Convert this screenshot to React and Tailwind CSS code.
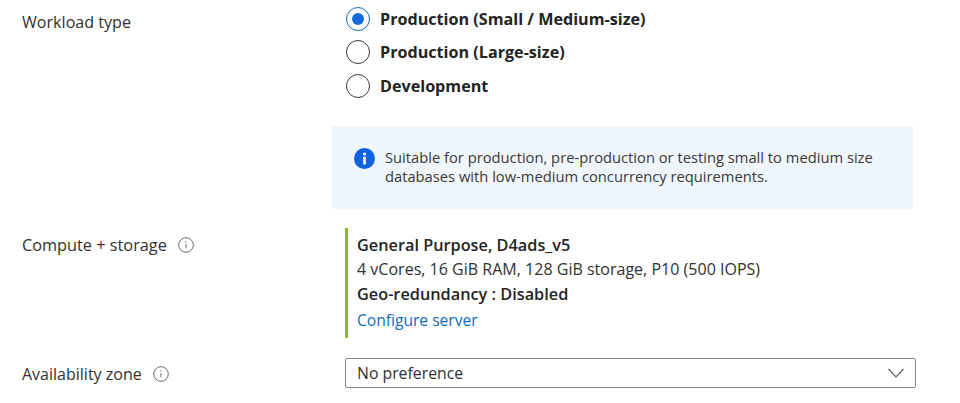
function Radio({ checked, label }) {
  return (
    <div className="flex items-center h-[33.5px] gap-[10px]">
      <span className={`flex items-center justify-center w-[24px] h-[24px] rounded-full border-[1.5px] ${checked ? "border-[#0f6cbd]" : "border-[#3b3b3b]"}`}>
        {checked && <span className="w-[12px] h-[12px] rounded-full bg-[#0f6cda]" />}
      </span>
      <span className="font-bold text-[16.15px] text-[#242424]">{label}</span>
    </div>
  );
}
function Tip() {
  return (
    <svg width="16" height="16" viewBox="0 0 16 16" fill="none" className="shrink-0">
      <circle cx="8" cy="8" r="7.3" stroke="#6b6b6b" strokeWidth="1" />
      <path d="M8 7v4.2" stroke="#6b6b6b" strokeWidth="1" />
      <circle cx="8" cy="4.9" r="0.7" fill="#6b6b6b" />
    </svg>
  );
}
export default function App() {
  return (
    <div className="w-[960px] h-[403px] overflow-hidden bg-white text-[#323130] text-[16px] font-['Open_Sans','Noto_Sans',sans-serif]">
      <div className="flex pt-[2px]">
        <div className="w-[332px] pl-[22px] pt-[9px] leading-[22px] text-[16.1px]">Workload type</div>
        <div className="w-[581px]">
          <div className="pl-[14px]">
            <Radio checked label="Production (Small / Medium-size)" />
            <Radio label="Production (Large-size)" />
            <Radio label="Development" />
          </div>
          <div className="mt-[23px] h-[83px] bg-[#eff6fc] flex items-center pl-[22px] pr-[30px] gap-[10px]">
            <svg width="21" height="21" viewBox="0 0 21 21" className="shrink-0 -mt-[18px]">
              <circle cx="10.5" cy="10.5" r="10.5" fill="#0f62e0" />
              <circle cx="10.5" cy="6" r="1.5" fill="#fff" />
              <rect x="9.2" y="8.8" width="2.6" height="7.6" rx="0.5" fill="#fff" />
            </svg>
            <p className="text-[14.73px] leading-[19px] text-[#3b3a39]">
              Suitable for production, pre-production or testing small to medium size databases with low-medium concurrency requirements.
            </p>
          </div>
        </div>
      </div>
      <div className="flex mt-[19px]">
        <div className="w-[345px] pl-[22px] flex items-start gap-[11px] pt-[6px] leading-[22px]">
          <span className="text-[16.3px]">Compute + storage</span>
          <span className="mt-[3px]"><Tip /></span>
        </div>
        <div className="border-l-[3px] border-[#8cbd24] h-[110px] pl-[9px] pt-[5px] text-[#323130]">
          <div className="font-semibold text-[16.3px] text-[#242424] leading-[24px]">General Purpose, D4ads_v5</div>
          <div className="leading-[25px] text-[16.05px]">4 vCores, 16 GiB RAM, 128 GiB storage, P10 (500 IOPS)</div>
          <div className="font-semibold text-[16.3px] text-[#242424] leading-[24px]">Geo-redundancy : Disabled</div>
          <div className="text-[#0f6cbd] text-[15.6px] leading-[26px] mt-[1px]">Configure server</div>
        </div>
      </div>
      <div className="flex mt-[20px]">
        <div className="w-[345px] pl-[22px] flex items-center gap-[11px] pt-[2px]">
          <span>Availability zone</span>
          <Tip />
        </div>
        <div className="w-[571px] h-[30px] border border-[#8a8886] rounded-[2px] flex items-center justify-between pl-[11px] pr-[11px]">
          <span className="pt-[2px] text-[15.8px]">No preference</span>
          <svg width="16" height="10" viewBox="0 0 16 10" fill="none">
            <path d="M0.5 1l7.5 8 7.5-8" stroke="#605e5c" strokeWidth="1.1" />
          </svg>
        </div>
      </div>
    </div>
  );
}
